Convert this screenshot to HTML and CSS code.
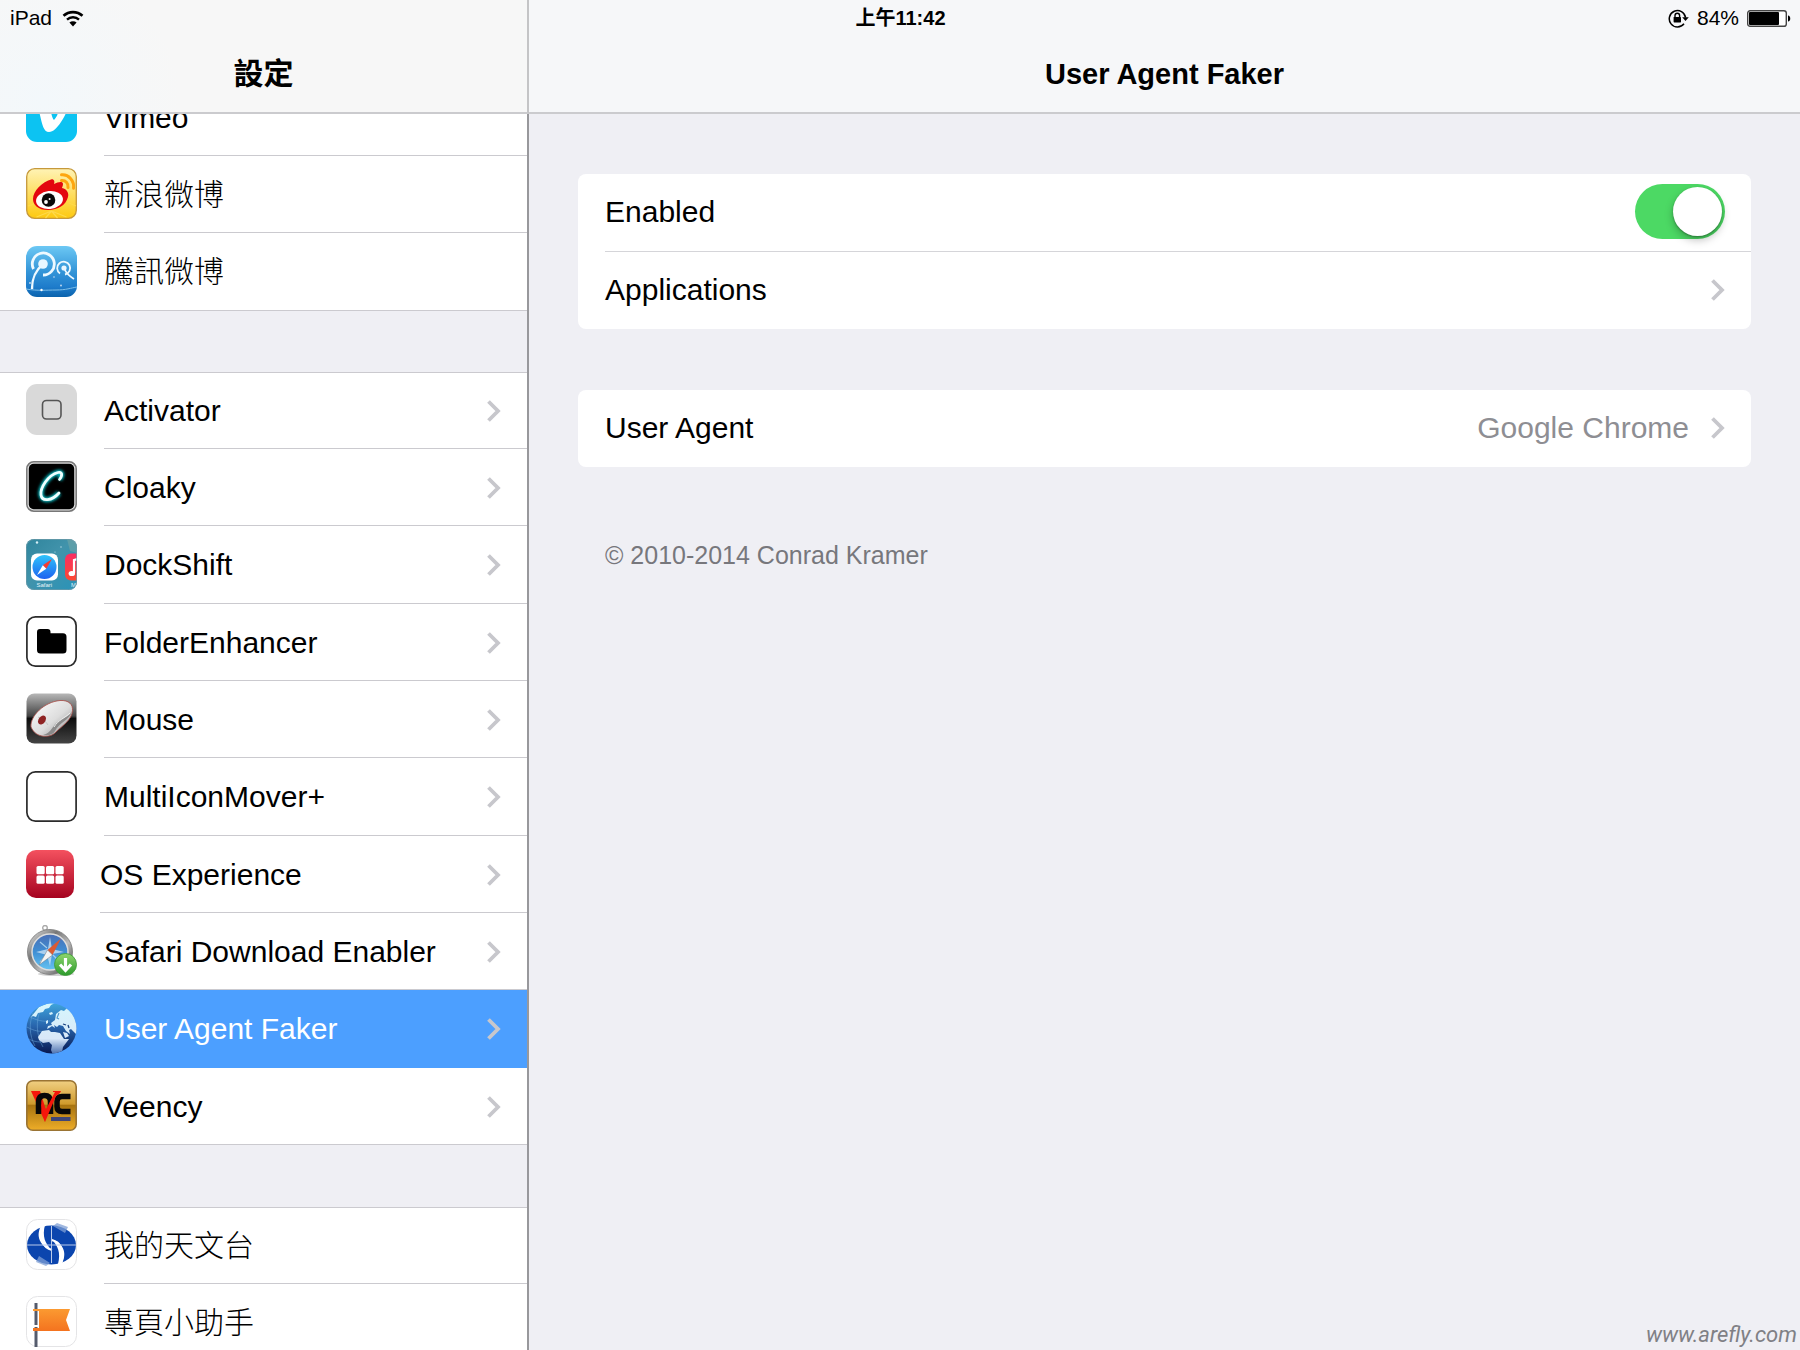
FILE: index.html
```html
<!DOCTYPE html>
<html lang="zh-Hant">
<head>
<meta charset="utf-8">
<meta name="viewport" content="width=device-width, initial-scale=1">
<title>設定</title>
<link rel="stylesheet" href="styles.css">
</head>
<body>
<svg class="defs" width="0" height="0" aria-hidden="true">
  <defs>
    <symbol id="chevron" viewBox="0 0 14 22"><path d="M1.500 1.500L11 11l-9.500 9.500" fill="none" stroke="currentColor" stroke-width="3.800"/></symbol>
  </defs>
</svg>
<div class="app">
  <div class="status">
    <div class="status-left">
      <span>iPad</span>
      <svg width="22" height="17" viewBox="0 0 22 17" aria-label="Wi-Fi"><path d="M1.500 5.800a14 14 0 0 1 19 0" fill="none" stroke="#000" stroke-width="2.600"/><path d="M5 9.600a8.800 8.800 0 0 1 12 0" fill="none" stroke="#000" stroke-width="2.400"/><path d="M7.400 12.600a5.200 5.200 0 0 1 7.200 0L11 16.400z"/></svg>
    </div>
    <time class="status-time">上午11:42</time>
    <div class="status-right">
      <svg width="21" height="19" viewBox="0 0 21 19" aria-label="Rotation lock"><path d="M16 14.800A8.200 8.200 0 1 1 17.600 8.600" fill="none" stroke="#000" stroke-width="1.500"/><path d="M14.200 8.200h6.600L17.500 12z"/><rect x="5.600" y="8" width="7.400" height="5.400" rx=".6"/><path d="M7 8.400V6.600a2.300 2.300 0 0 1 4.600 0v1.800" fill="none" stroke="#000" stroke-width="1.400"/></svg>
      <span>84%</span>
      <svg width="44" height="17" viewBox="0 0 44 17" aria-label="Battery"><rect x=".7" y=".7" width="38.600" height="15.600" rx="2.400" fill="#fff" stroke="#444" stroke-width="1.400"/><rect x="2" y="2" width="30" height="13" rx="1"/><path d="M41 5.400c3 .4 3 5.800 0 6.200z"/></svg>
    </div>
  </div>

  <nav class="sidebar" aria-label="設定">
    <header class="bar bar-side"><h1>設定</h1></header>
    <div class="scroll">
      <ul class="group group-scrolled">
        <li class="row"><a href="#vimeo">
          <svg class="icon" viewBox="0 0 51 51"><rect width="51" height="51" rx="11" fill="#0cc3f2"/><path d="M9 18c5-5 10-8 13-5 3 4 3 13 6 16 3-3 5-8 3-9-2-1-3 0-4 1 2-8 7-12 12-10 5 3 1 13-4 20-4 6-8 10-12 10-6 0-7-9-10-21-1-3-3-1-4 0z" fill="#fff"/></svg>
          <span class="label">Vimeo</span></a></li>
        <li class="row"><a href="#weibo">
          <svg class="icon" viewBox="0 0 51 51"><defs><linearGradient id="wb" x2="0" y2="1"><stop offset="0" stop-color="#fff3b5"/><stop offset=".5" stop-color="#fede62"/><stop offset="1" stop-color="#fdc90f"/></linearGradient></defs><rect x=".7" y=".7" width="49.600" height="49.600" rx="8" fill="url(#wb)" stroke="#c6993b" stroke-width="1.300"/><path d="M25.500 43l-15 6M25.500 43l-6 7M25.500 43l6 7M25.500 43l15 6M8 36l-6 2M43 35l7 3" stroke="#fed94a" stroke-width="1.200"/><path d="M7 31c0-8 9-17 18-19.500 3-.8 4 2 3 4.500 4-2 9-3 9 0 0 2-1 3-1 4 5 1 7 5 6 9-2 8-10 13-20 13S7 37 7 31z" fill="#e3070f"/><ellipse cx="23.500" cy="32" rx="13.500" ry="9" transform="rotate(-6 23.500 32)" fill="#fff"/><circle cx="22.500" cy="32" r="6.800" fill="#0a0a0a"/><circle cx="20" cy="34" r="1.900" fill="#fff"/><circle cx="23.600" cy="31" r="1" fill="#fff"/><path d="M35.500 12.500c4-.5 7 3 6.500 7" fill="none" stroke="#fea60f" stroke-width="3" stroke-linecap="round"/><path d="M35.500 6.800c7-.8 13 6 12 13.500" fill="none" stroke="#fea60f" stroke-width="3" stroke-linecap="round"/></svg>
          <span class="label">新浪微博</span></a></li>
        <li class="row"><a href="#tencent">
          <svg class="icon" viewBox="0 0 51 51"><defs><linearGradient id="tx" x2="0" y2="1"><stop offset="0" stop-color="#6cc8f4"/><stop offset=".5" stop-color="#3495d8"/><stop offset=".8" stop-color="#1e7ccb"/><stop offset="1" stop-color="#0a62ac"/></linearGradient></defs><rect width="51" height="51" rx="11" fill="url(#tx)"/><path d="M0 43c12 2 20 1 30 1s15-2 21-3" fill="none" stroke="#7fbfe8" stroke-width="1"/><g fill="none" stroke="#eef9ff"><path d="M7.500 23A11 11 0 1 1 17 29" stroke-width="2.800"/><path d="M17 18C9 25 6 32 6 43" stroke-width="2.400"/><path d="M34 27.500a6.500 6.500 0 1 1 5 1" stroke-width="1.800"/><path d="M38 22c2 5 5 8 10 11" stroke-width="1.800"/></g><circle cx="17" cy="18" r="4.800" fill="#eaf7ff"/><circle cx="38" cy="22" r="2.600" fill="#eaf7ff"/><circle cx="15.500" cy="44" r="1.200" fill="#fff"/><circle cx="4" cy="37" r=".9" fill="#cde"/><circle cx="28" cy="31" r=".8" fill="#cde"/><circle cx="35" cy="39.500" r=".9" fill="#cde"/></svg>
          <span class="label">騰訊微博</span></a></li>
      </ul>

      <ul class="group">
        <li class="row"><a href="#activator">
          <svg class="icon" viewBox="0 0 51 51"><rect width="51" height="51" rx="11" fill="#d9d9d9"/><rect x="16.500" y="16.500" width="18.500" height="18.500" rx="4" fill="none" stroke="#555" stroke-width="1.600"/></svg>
          <span class="label">Activator</span><svg class="chevron"><use href="#chevron"/></svg></a></li>
        <li class="row"><a href="#cloaky">
          <svg class="icon" viewBox="0 0 51 51"><defs><filter id="glow" x="-40%" y="-40%" width="180%" height="180%"><feGaussianBlur stdDeviation="1.600"/></filter></defs><rect x=".8" y=".8" width="49.400" height="49.400" rx="7" fill="#ddd" stroke="#777" stroke-width="1.500"/><rect x="2.800" y="2.800" width="45.400" height="45.400" rx="5" fill="#000"/><path d="M33.500 18.500C37 14 36 10.500 32 11.500 22 14 14 27 15 34c1 7 11 6 18-2" fill="none" stroke="#10c7cf" stroke-width="5" filter="url(#glow)"/><path d="M33.500 18.500C37 14 36 10.500 32 11.500 22 14 14 27 15 34c1 7 11 6 18-2" fill="none" stroke="#efffff" stroke-width="2.800" stroke-linecap="round"/></svg>
          <span class="label">Cloaky</span><svg class="chevron"><use href="#chevron"/></svg></a></li>
        <li class="row"><a href="#dockshift">
          <svg class="icon" viewBox="0 0 51 51"><defs><linearGradient id="ds" x2="1" y2="1"><stop offset="0" stop-color="#2f859d"/><stop offset=".45" stop-color="#4193ab"/><stop offset="1" stop-color="#2a93b8"/></linearGradient><linearGradient id="sf" x2="0" y2="1"><stop offset="0" stop-color="#2fc4fb"/><stop offset="1" stop-color="#1d62f0"/></linearGradient><linearGradient id="mu" x2="0" y2="1"><stop offset="0" stop-color="#fb2d63"/><stop offset="1" stop-color="#fb4a34"/></linearGradient><clipPath id="dc"><rect width="51" height="51" rx="8"/></clipPath></defs><g clip-path="url(#dc)"><rect width="51" height="51" fill="url(#ds)"/><path d="M41 0l3 12 7 2V0z" fill="#79a9a6" opacity=".5"/><circle cx="11" cy="3.500" r="1.200" fill="#d5eef5"/><circle cx="35" cy="8" r=".7" fill="#bfe0ea"/><circle cx="29" cy="13" r=".6" fill="#bfe0ea"/><rect x="5" y="14.500" width="27" height="27" rx="6" fill="#fff"/><circle cx="18.500" cy="28" r="12" fill="url(#sf)"/><path d="M26 20l-9.200 6.300 3.500 3.500z" fill="#f53b30"/><path d="M11 36l5.800-9.700 3.500 3.500z" fill="#fff"/><rect x="39" y="14.500" width="27" height="27" rx="6" fill="url(#mu)"/><path d="M48 34V21l6-1.500" fill="none" stroke="#fff" stroke-width="2.200"/><ellipse cx="45.800" cy="34.500" rx="3.200" ry="2.600" fill="#fff"/><text class="tiny" x="10.500" y="48">Safari</text><text class="tiny" x="45" y="48">M</text></g><rect x=".4" y=".4" width="50.200" height="50.200" rx="8" fill="none" stroke="#6f9ba8" stroke-width=".8"/></svg>
          <span class="label">DockShift</span><svg class="chevron"><use href="#chevron"/></svg></a></li>
        <li class="row"><a href="#folderenhancer">
          <svg class="icon" viewBox="0 0 51 51"><rect x=".9" y=".9" width="49.200" height="49.200" rx="8.500" fill="#fff" stroke="#2b2b2b" stroke-width="1.700"/><path d="M11 16a3 3 0 0 1 3-3h7.500a3 3 0 0 1 3 3v1.200H37a3.500 3.500 0 0 1 3.500 3.500V34a3.500 3.500 0 0 1-3.500 3.500H14.500A3.500 3.500 0 0 1 11 34z"/></svg>
          <span class="label">FolderEnhancer</span><svg class="chevron"><use href="#chevron"/></svg></a></li>
        <li class="row"><a href="#mouse">
          <svg class="icon" viewBox="0 0 51 51"><defs><linearGradient id="mb" x2="0" y2="1"><stop offset="0" stop-color="#b7b7b7"/><stop offset=".45" stop-color="#444"/><stop offset=".5" stop-color="#0c0c0c"/><stop offset="1" stop-color="#444"/></linearGradient><linearGradient id="mm" x2="1" y2="1"><stop offset="0" stop-color="#fff"/><stop offset=".55" stop-color="#ddd"/><stop offset="1" stop-color="#888"/></linearGradient></defs><rect x=".5" y=".5" width="50" height="50" rx="8" fill="url(#mb)"/><path d="M5 34C4 23 18 9 34 7.500c9-.5 13 4 12.500 10C46 27 36 33 30 39c-5 6-20 7-25-5z" fill="url(#mm)" stroke="#a84a44" stroke-width=".8"/><path d="M46 19c-3 8-13 11-17 19-2 4-7 5-12 4 9-2 9-10 16-14 6-4 10-5 13-9z" fill="#8a8a8a"/><path d="M44 20c-5 5-12 7-16 14" fill="none" stroke="#eee"/><path d="M12 24c4 2 8 4 10 8" fill="none" stroke="#bbb" stroke-width=".8"/><ellipse cx="16" cy="27" rx="3.400" ry="5" transform="rotate(35 16 27)" fill="#8f2424"/></svg>
          <span class="label">Mouse</span><svg class="chevron"><use href="#chevron"/></svg></a></li>
        <li class="row"><a href="#multiiconmover">
          <svg class="icon" viewBox="0 0 51 51"><rect x=".9" y=".9" width="49.200" height="49.200" rx="8.500" fill="#fff" stroke="#2b2b2b" stroke-width="1.700"/></svg>
          <span class="label">MultiIconMover+</span><svg class="chevron"><use href="#chevron"/></svg></a></li>
        <li class="row row-compact"><a href="#osexperience">
          <svg class="icon" viewBox="0 0 48 48"><defs><linearGradient id="os" x2="0" y2="1"><stop offset="0" stop-color="#f4515f"/><stop offset="1" stop-color="#a5021f"/></linearGradient></defs><rect width="48" height="48" rx="10" fill="url(#os)"/><g fill="#fff"><rect x="10.500" y="16" width="8.200" height="8.200" rx="1.500"/><rect x="20" y="16" width="8.200" height="8.200" rx="1.500"/><rect x="29.500" y="16" width="8.200" height="8.200" rx="1.500"/><rect x="10.500" y="25.500" width="8.200" height="8.200" rx="1.500"/><rect x="20" y="25.500" width="8.200" height="8.200" rx="1.500"/><rect x="29.500" y="25.500" width="8.200" height="8.200" rx="1.500"/></g></svg>
          <span class="label">OS Experience</span><svg class="chevron"><use href="#chevron"/></svg></a></li>
        <li class="row row-before-selected"><a href="#safaridownload">
          <svg class="icon" viewBox="0 0 51 51"><defs><linearGradient id="rim" x2="1" y2="1"><stop offset="0" stop-color="#f2f2f2"/><stop offset=".35" stop-color="#777"/><stop offset=".6" stop-color="#bbb"/><stop offset="1" stop-color="#333"/></linearGradient><linearGradient id="face" x2="0" y2="1"><stop offset="0" stop-color="#4a6fb5"/><stop offset=".5" stop-color="#3f8fd4"/><stop offset="1" stop-color="#66c3f2"/></linearGradient><linearGradient id="dl" x2="0" y2="1"><stop offset="0" stop-color="#8fd66f"/><stop offset="1" stop-color="#2c9a2c"/></linearGradient></defs><circle cx="19" cy="2.800" r="2.300" fill="none" stroke="#aaa" stroke-width="1.400"/><path d="M15 6h8v3h-8z" fill="#999"/><ellipse cx="30" cy="49" rx="18" ry="2" fill="#000" opacity=".18"/><circle cx="24" cy="27" r="22.500" fill="url(#rim)" stroke="#777" stroke-width=".8"/><circle cx="24" cy="27" r="18" fill="url(#face)" stroke="#ddd" stroke-width="1.500"/><path d="M24 12l2 12 12 3-12 2-2 12-3-11-11-3 12-3z" fill="#c5e0f5" opacity=".8"/><path d="M14 17l7 6M34 37l-7-7M14 37l7-7" stroke="#a5cdea" stroke-width="1.200"/><path d="M35 13.500L21.500 25l5 5z" fill="#dc5a33"/><path d="M13 40l8.500-15 5 5z" fill="#f5f5f5" stroke="#777" stroke-width=".5"/><circle cx="39.500" cy="39.500" r="11" fill="url(#dl)" stroke="#3b9a35" stroke-width=".8"/><path d="M39.500 33v12M34 39.500l5.500 6 5.500-6" fill="none" stroke="#fff" stroke-width="3.200"/></svg>
          <span class="label">Safari Download Enabler</span><svg class="chevron"><use href="#chevron"/></svg></a></li>
        <li class="row row-selected"><a href="#useragentfaker" aria-current="page">
          <svg class="icon" viewBox="0 0 51 51"><defs><linearGradient id="gl" x2="0" y2="1"><stop offset="0" stop-color="#3fa6dd"/><stop offset=".45" stop-color="#2865ad"/><stop offset="1" stop-color="#07174f"/></linearGradient><linearGradient id="land" gradientUnits="userSpaceOnUse" x1="0" y1="0" x2="0" y2="51"><stop offset="0" stop-color="#d5f6fd"/><stop offset=".7" stop-color="#d9e8f8"/><stop offset="1" stop-color="#4a6fae"/></linearGradient><clipPath id="gc"><circle cx="25.500" cy="25.500" r="25"/></clipPath></defs><g clip-path="url(#gc)"><rect width="51" height="51" fill="url(#gl)"/><path d="M4 14c6 3 13 5 20 4M1 24c7 4 13 5 20 4M1 35c5 3 9 4 14 4M14 8c-4 10-4 24 3 36M7 10C3 20 3 32 9 43" fill="none" stroke="#6fa9dc" stroke-width=".7" opacity=".7"/><g fill="url(#land)"><path d="M5 14L13 4l10-4h6l-4 2-2 3-4 1-2 3-5 1-2 4-3-1z"/><path d="M23 10l3-1 1 2-3 1z"/><path d="M20 18l2-1v3l-2 1z"/><path d="M21 26l1-3 4-1-1-2 4-3 1-6 5-4 3 1 3-3 5 2 6 10 1 12-3 2-5-5-2 1 1 4-4-3-3-5-4-1-2 2-3-2 1 3-3-2-3 2z"/><path d="M12 34l4-6 7-1 2 2 4 0 5 1 4 6 5 0-6 8-1 5-5 3h-4l-2-5 1-5-3-3-6 1-4-3z"/><path d="M37 29l4 1 2 3-4 2z"/></g><path d="M33 10l-2 5 2 1" fill="none" stroke="#4b97cc" stroke-width="1.100"/><path d="M37 21l3 1M42 22l1 3" stroke="#1a427f" stroke-width="1.300"/></g></svg>
          <span class="label">User Agent Faker</span><svg class="chevron"><use href="#chevron"/></svg></a></li>
        <li class="row"><a href="#veency">
          <svg class="icon" viewBox="0 0 51 51"><defs><linearGradient id="vn" x2="0" y2="1"><stop offset="0" stop-color="#f0cf82"/><stop offset=".47" stop-color="#cf9a2c"/><stop offset=".5" stop-color="#a87410"/><stop offset="1" stop-color="#eead28"/></linearGradient></defs><rect x=".8" y=".8" width="49.400" height="49.400" rx="6" fill="url(#vn)" stroke="#9a7434" stroke-width="1.600"/><rect x="25" y="37" width="19.500" height="4" fill="#3f4678"/><path d="M5 11h9l6 19-1 12z" fill="#f5160b"/><path d="M12.500 34V22q0-6.500 6-6.500t6 6.500v12" fill="none" stroke="#080808" stroke-width="5.500"/><path d="M44.500 16.500H36q-5 0-5 5v5q0 5 5 5h8.500" fill="none" stroke="#080808" stroke-width="5.500"/><path d="M15 24l5 5 9-17h-2v-1h8l-1 2-4 3-11 26z" fill="#f5160b"/></svg>
          <span class="label">Veency</span><svg class="chevron"><use href="#chevron"/></svg></a></li>
      </ul>

      <ul class="group">
        <li class="row"><a href="#observatory">
          <svg class="icon" viewBox="0 0 51 51"><defs><linearGradient id="fade1" x1="0" y1="0" x2="1" y2="0"><stop offset="0" stop-color="#0b45ae"/><stop offset="1" stop-color="#fff"/></linearGradient></defs><rect x=".5" y=".5" width="50" height="50" rx="11" fill="#fff" stroke="#e4e4e6"/><ellipse cx="25.500" cy="26" rx="24.500" ry="19.500" fill="#0b45ae"/><path d="M27 7l4-3 11 4-3 6zM24 44l-4 3-10-4 3-6z" fill="#7f9fd4" opacity=".75"/><path d="M17 4C9 14 12 27 26 31c-7-6-10-14-7-25zM34 47c8-10 5-23-9-27 7 6 10 14 7 25z" fill="#fff"/><path d="M26 31c-9-2-14-12-9-27M25 21c10 1 15 13 9 26" fill="none" stroke="#fff" stroke-width="2"/><path d="M1 26h49M25.500 7v37" stroke="#b9caea" stroke-width="1"/></svg>
          <span class="label">我的天文台</span></a></li>
        <li class="row"><a href="#pages">
          <svg class="icon" viewBox="0 0 51 51"><defs><linearGradient id="fl" x2="0" y2="1"><stop offset="0" stop-color="#fb9a31"/><stop offset="1" stop-color="#f4731f"/></linearGradient></defs><rect x=".5" y=".5" width="50" height="50" rx="11" fill="#fff" stroke="#e4e4e6"/><path d="M8.500 7h3v44h-3z" fill="#555b6c"/><path d="M7 13h37l-4 11 4 11H7v-3h6V15H7z" fill="url(#fl)"/><path d="M8 15v16h5V15z" fill="#fff"/><path d="M8.500 15h3v14h-3z" fill="#555b6c"/></svg>
          <span class="label">專頁小助手</span></a></li>
      </ul>
    </div>
  </nav>

  <main class="detail">
    <header class="bar"><h2>User Agent Faker</h2></header>
    <div class="content">
      <section class="card">
        <div class="cell"><label for="enabled">Enabled</label><input class="switch" type="checkbox" role="switch" id="enabled" checked></div>
        <a class="cell" href="#applications"><span>Applications</span><svg class="chevron"><use href="#chevron"/></svg></a>
      </section>
      <section class="card">
        <a class="cell" href="#useragent"><span>User Agent</span><span class="value">Google Chrome</span><svg class="chevron"><use href="#chevron"/></svg></a>
      </section>
      <p class="note">© 2010-2014 Conrad Kramer</p>
    </div>
    <a class="watermark" href="#arefly">www.arefly.com</a>
  </main>
</div>
</body>
</html>
```
FILE: styles.css
```css
* { box-sizing: border-box; }

body {
  margin: 0;
  background: #efeff4;
  color: #000;
  font: 300 30px/36px "Liberation Sans", "Noto Sans CJK TC", sans-serif;
}

a { color: inherit; text-decoration: none; }
h1, h2, p, ul { margin: 0; padding: 0; }
ul { list-style: none; }
.defs { position: absolute; }

.app {
  position: relative;
  display: grid;
  grid-template-columns: 529px 1fr;
  height: 100vh;
  overflow: hidden;
}

/* Status bar, laid over both title bars */
.status {
  position: absolute;
  z-index: 1;
  inset: 0 0 auto 0;
  display: grid;
  grid-template-columns: 1fr auto 1fr;
  align-items: center;
  height: 36px;
  padding: 0 9px 0 10px;
  font-size: 21px;
  line-height: 24px;
}
.status-left, .status-right { display: flex; align-items: center; gap: 10px; }
.status-right { justify-content: flex-end; gap: 8px; }
.status-time { font-weight: bold; font-size: 20px; }

/* Title bars */
.bar {
  flex: none;
  display: flex;
  justify-content: center;
  height: 114px;
  padding-top: 56px;
  border-bottom: 2px solid #cbcbce;
  background: #f6f7f9;
}
.bar-side {
  margin-right: -2px;
  border-right: 2px solid #c4c4c6;
  background: radial-gradient(circle at 8% 90%, #f3f8fb, #f7f7f7 28%);
}
.bar h1 { font-size: 30px; line-height: 36px; font-weight: bold; }
.bar h2 { font-size: 29px; line-height: 36px; font-weight: bold; }

/* Sidebar */
.sidebar {
  display: flex;
  flex-direction: column;
  min-height: 0;
  border-right: 2px solid #98989c;
}
.scroll { flex: 1; min-height: 0; overflow: hidden; }

.group {
  margin-bottom: 62px;
  background: #fff;
  box-shadow: inset 0 1px #cbcacf;
}
.group-scrolled { margin-top: -35px; margin-bottom: 61px; }

.row { display: grid; height: 77px; }
.row:nth-child(3n) { height: 78px; }
.row a {
  display: grid;
  grid-template-columns: 51px 1fr;
  column-gap: 27px;
  padding-left: 26px;
  align-items: center;
  position: relative;
}
.row a:has(.chevron) { grid-template-columns: 51px 1fr 40px; }
.row a::after {
  content: "";
  position: absolute;
  inset: auto 0 0 104px;
  height: 1px;
  background: #cbcacf;
}
.row:last-child a::after, .row-before-selected a::after { left: 0; }
.icon { display: block; width: 51px; height: 51px; margin-bottom: 2px; }
.label { white-space: nowrap; }
.chevron { display: block; width: 14px; height: 22px; color: #c7c7cc; }

.row-compact a:has(.chevron) { grid-template-columns: 48px 1fr 40px; column-gap: 26px; }
.row-compact .icon { width: 48px; height: 48px; }
.row-compact a::after { left: 100px; }

.row-selected a { background: #4c9fff; color: #fff; }
.row-selected a::after { display: none; }

/* Detail pane */
.detail { position: relative; min-width: 0; }
.content {
  display: flex;
  flex-direction: column;
  gap: 61px;
  padding: 60px 49px;
}
.card { border-radius: 8px; background: #fff; }
.cell {
  display: flex;
  align-items: center;
  height: 77px;
  margin-left: 27px;
  padding: 0 26px 2px 0;
}
.cell > :first-child { flex: 1; }
.cell + .cell { height: 78px; border-top: 1px solid #d5d5d9; }
.value { margin-right: 22px; color: #8e8e93; }

.switch {
  appearance: none;
  display: flex;
  justify-content: flex-end;
  width: 90px;
  height: 55px;
  margin: 0;
  padding: 3px;
  border-radius: 28px;
  background: #e5e5ea;
}
.switch:checked { background: #4cd964; }
.switch::before {
  content: "";
  width: 49px;
  height: 49px;
  border-radius: 50%;
  background: #fff;
  box-shadow: 0 4px 8px rgba(0, 0, 0, .25), 0 1px 2px rgba(0, 0, 0, .3);
}
.switch:not(:checked)::before { margin-right: auto; }

.note {
  padding: 9px 27px;
  color: #77777c;
  font-size: 25px;
}

.watermark {
  position: absolute;
  right: 3px;
  bottom: 3px;
  color: #808085;
  font: italic 22px/24px "Roboto", sans-serif;
}

.tiny { fill: #e6f4f8; font: 6px "Liberation Sans", sans-serif; }
```
